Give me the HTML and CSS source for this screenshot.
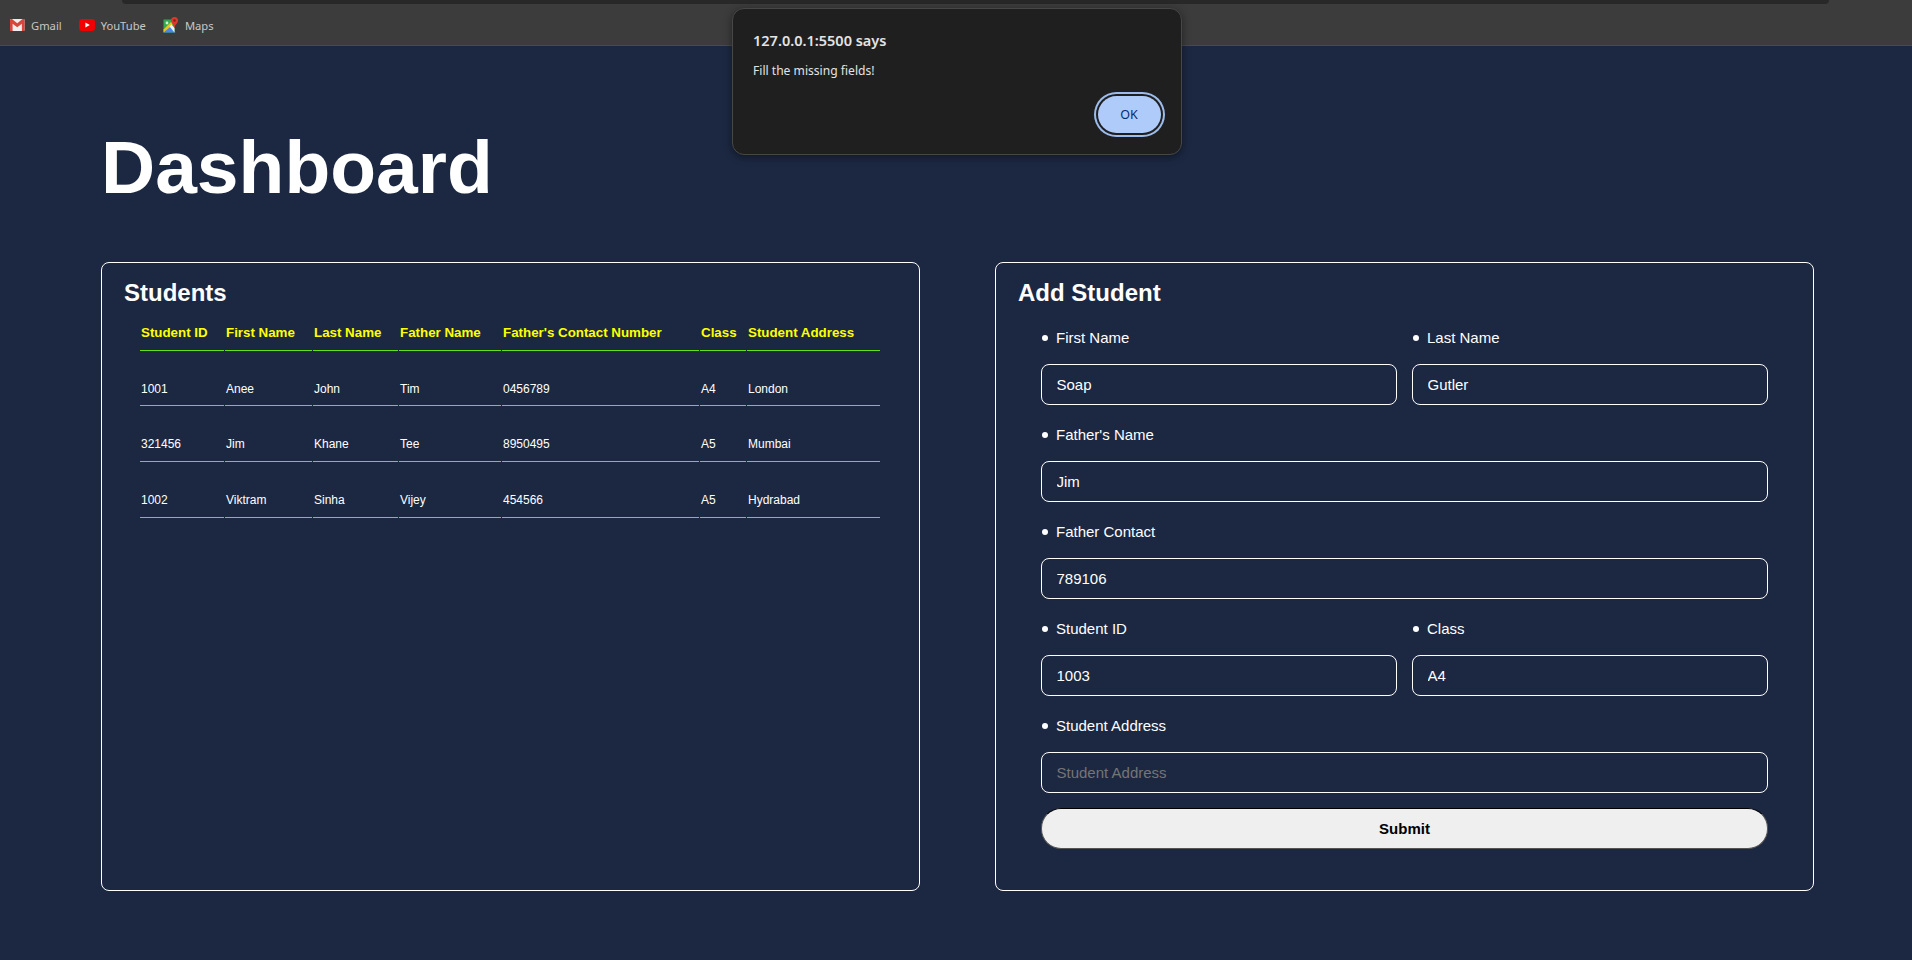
FILE: index.html
```html
<!DOCTYPE html>
<html>
<head>
<meta http-equiv="Content-Type" content="text/html; charset=utf-8"/>
<title>Dashboard</title>
<link rel="stylesheet" href="styles.css">
</head>

<body>

<!-- browser chrome -->
<div class="topbar">
  <div class="addressbar"></div>
  <div class="bookmarks">
    <span class="bookmark">
      <svg class="bm-icon" width="16" height="16" viewBox="0 0 16 16">
        <rect x="1" y="2" width="14.500" height="12" rx="1" fill="#eeeeee"/>
        <path d="M1 14V3.200C1 2.500 1.500 2 2.200 2H3l5.250 4.200L13.500 2h.8c.7 0 1.200.5 1.200 1.200V14h-2.600V6.800L8.250 10.300 3.600 6.800V14z" fill="#d9453a"/>
      </svg>
      Gmail
    </span>
    <span class="bookmark">
      <svg class="bm-icon" width="16" height="16" viewBox="0 0 16 16">
        <rect x="0" y="2" width="16" height="12" rx="3" fill="#f00000"/>
        <path d="M6.400 5.500 10.800 8l-4.400 2.500z" fill="#ffffff"/>
      </svg>
      YouTube
    </span>
    <span class="bookmark">
      <svg class="bm-icon" width="16" height="16" viewBox="0 0 16 16">
        <path d="M0.500 2.500h11v13h-11z" fill="#35a853"/>
        <path d="M0.500 15.500 6.500 9.500l6 6z" fill="#4a86e8"/>
        <path d="M0.500 15.500v-3L8 5l2 0.500-1 3z" fill="#f4c20d"/>
        <path d="M6.500 9.500 8.500 7.500 11.500 11v4.500z" fill="#f2f2f2"/>
        <circle cx="4" cy="6" r="1.400" fill="#d6efd6"/>
        <path d="M11.500 0c-2.100 0-3.600 1.500-3.600 3.500 0 2.500 2.700 4 3.600 6.700.9-2.700 3.600-4.200 3.600-6.700C15.100 1.500 13.600 0 11.500 0z" fill="#d93a2f"/>
        <circle cx="11.500" cy="3.500" r="1.300" fill="#8c1f18"/>
      </svg>
      Maps
    </span>
  </div>
</div>

<!-- alert box -->
<div class="alert">
  <div class="alert-title">127.0.0.1:5500 says</div>
  <div class="alert-text">Fill the missing fields!</div>
  <div class="alert-actions"><button class="alert-ok">OK</button></div>
</div>

<div class="main">
  <h1>Dashboard</h1>

  <div class="columns">
    <div class="card">
      <h2>Students</h2>
      <table class="students">
        <colgroup>
          <col class="c-id"><col class="c-first"><col class="c-last"><col class="c-father">
          <col class="c-contact"><col class="c-class"><col class="c-address">
        </colgroup>
        <thead>
          <tr>
            <th>Student ID</th>
            <th>First Name</th>
            <th>Last Name</th>
            <th>Father Name</th>
            <th>Father's Contact Number</th>
            <th>Class</th>
            <th>Student Address</th>
          </tr>
        </thead>
        <tbody>
          <tr><td>1001</td><td>Anee</td><td>John</td><td>Tim</td><td>0456789</td><td>A4</td><td>London</td></tr>
          <tr><td>321456</td><td>Jim</td><td>Khane</td><td>Tee</td><td>8950495</td><td>A5</td><td>Mumbai</td></tr>
          <tr><td>1002</td><td>Viktram</td><td>Sinha</td><td>Vijey</td><td>454566</td><td>A5</td><td>Hydrabad</td></tr>
        </tbody>
      </table>
    </div>

    <div class="card">
      <h2>Add Student</h2>
      <form class="student-form">
        <div class="field">
          <label>First Name</label>
          <input type="text" value="Soap">
        </div>
        <div class="field">
          <label>Last Name</label>
          <input type="text" value="Gutler">
        </div>
        <div class="field wide">
          <label>Father's Name</label>
          <input type="text" value="Jim">
        </div>
        <div class="field wide">
          <label>Father Contact</label>
          <input type="text" value="789106">
        </div>
        <div class="field">
          <label>Student ID</label>
          <input type="text" value="1003">
        </div>
        <div class="field">
          <label>Class</label>
          <input type="text" value="A4">
        </div>
        <div class="field wide">
          <label>Student Address</label>
          <input type="text" placeholder="Student Address">
        </div>
        <button type="button" class="submit wide">Submit</button>
      </form>
    </div>
  </div>
</div>

</body>
</html>
```

FILE: styles.css
```css
body {
  margin: 0;
  height: 960px;
  overflow: hidden;
  background-color: #1c2842;
  color: white;
  font-family: "Liberation Sans", Arial, sans-serif;
}

/* browser chrome */
.topbar {
  height: 45px;
  background-color: #3c3c3c;
  border-bottom: 1px solid #4a4a4a;
}

.addressbar {
  height: 4px;
  margin: 0 83px 0 122px;
  background-color: #282828;
  border-radius: 0 0 8px 8px;
}

.bookmarks {
  display: flex;
  gap: 17px;
  padding: 10px 0 0 9px;
}

.bookmark {
  display: flex;
  align-items: center;
  gap: 6px;
  height: 22px;
  font-family: "Noto Sans", sans-serif;
  font-size: 11.2px;
  color: #c7c7c7;
}

/* alert box */
.alert {
  position: absolute;
  left: 732px;
  top: 8px;
  box-sizing: border-box;
  width: 450px;
  height: 147px;
  padding: 21px 20.5px 0 20px;
  background-color: #1f1f1f;
  border: 1px solid #474747;
  border-radius: 12px;
  box-shadow: 0 2px 8px rgba(0, 0, 0, 0.45);
  font-family: "Noto Sans", sans-serif;
  color: #e3e3e3;
}

.alert-title {
  font-size: 14.5px;
  font-weight: 600;
  line-height: 20px;
}

.alert-text {
  margin-top: 12px;
  font-size: 12.1px;
  line-height: 18px;
}

.alert-actions {
  display: flex;
  justify-content: flex-end;
  margin-top: 16px;
}

.alert-ok {
  width: 63px;
  height: 37px;
  padding: 0;
  border: none;
  border-radius: 19px;
  background-color: #aecbf9;
  box-shadow: 0 0 0 2px #1f1f1f, 0 0 0 4px #9dbcee;
  color: #062e6f;
  font-family: "Noto Sans", sans-serif;
  font-size: 12.5px;
}

/* page */
.main {
  padding: 78px 0 0 101px;
}

h1 {
  margin: 0 0 52px;
  font-size: 75px;
  line-height: 86px;
}

.columns {
  display: grid;
  grid-template-columns: 819px 819px;
  gap: 75px;
}

.card {
  box-sizing: border-box;
  height: 629px;
  padding: 16px 22px;
  border: 1px solid white;
  border-radius: 8px;
}

h2 {
  margin: 0;
  font-size: 24px;
  line-height: 28px;
}

/* table */
.students {
  table-layout: fixed;
  width: 742px;
  margin: 3px 0 0 15px;
  border-collapse: separate;
  border-spacing: 1px 0;
}

.c-id { width: 84px; }
.c-first { width: 87px; }
.c-last { width: 85px; }
.c-father { width: 102px; }
.c-contact { width: 197px; }
.c-class { width: 46px; }
.c-address { width: 133px; }

.students th {
  height: 30px;
  padding: 0 0 10px 1px;
  border-bottom: 1px solid #62e30f;
  color: yellow;
  font-size: 13.33px;
  text-align: left;
  vertical-align: bottom;
}

.students td {
  height: 45px;
  padding: 0 0 10px 1px;
  border-bottom: 1px solid #62e30f;
  font-size: 12px;
  line-height: 14px;
  vertical-align: bottom;
}

.students tbody tr:first-child td {
  height: 45px;
  padding-bottom: 9px;
}

/* form */
.student-form {
  display: grid;
  grid-template-columns: 356px 356px;
  column-gap: 15px;
  row-gap: 21px;
  margin: 22px 0 0 23px;
}

.wide {
  grid-column: span 2;
}

.field label {
  display: block;
  margin-bottom: 17px;
  font-size: 15px;
  line-height: 18px;
}

.field label::before {
  content: "";
  display: inline-block;
  width: 6px;
  height: 6px;
  margin: 0 8px 2px 1px;
  border-radius: 50%;
  background-color: white;
  vertical-align: middle;
}

.field input {
  display: block;
  box-sizing: border-box;
  width: 100%;
  height: 41px;
  padding: 0 14.5px;
  background: transparent;
  border: 1px solid white;
  border-radius: 8px;
  color: white;
  font-family: "Liberation Sans", Arial, sans-serif;
  font-size: 15px;
}

.field input::placeholder {
  color: #757575;
}

.submit {
  height: 41px;
  margin-top: -6px;
  background-color: #efefef;
  border: 1px solid #555555;
  border-top-color: black;
  border-radius: 20px;
  color: black;
  font-family: "Liberation Sans", Arial, sans-serif;
  font-size: 15px;
  font-weight: bold;
}
```
